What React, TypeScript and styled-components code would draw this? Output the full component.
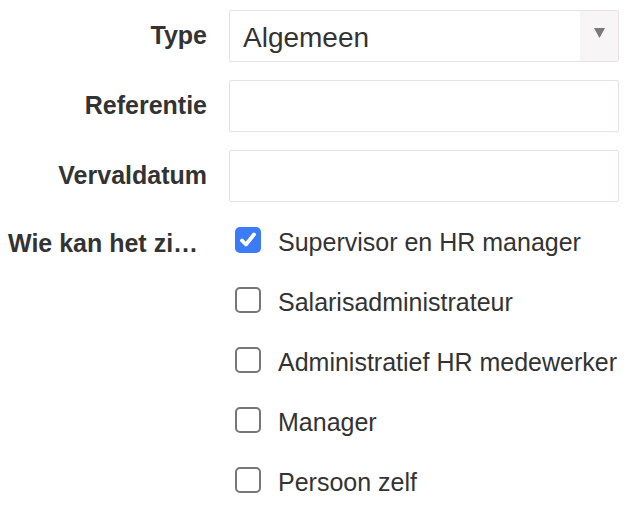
import React from 'react';
import styled, { createGlobalStyle } from 'styled-components';

const GlobalStyle = createGlobalStyle`
    body {
        margin: 0;
        background: #ffffff;
        font-family: 'Liberation Sans', Arial, Helvetica, sans-serif;
        color: #333333;
    }
`;

const Form = styled.div`
    display: grid;
    grid-template-columns: 199px 390px;
    column-gap: 22px;
    row-gap: 18px;
    padding: 10px 17px 0 8px;
    align-items: center;
`;

const Label = styled.label`
    font-size: 25px;
    font-weight: bold;
    color: #333333;
    text-align: right;
    white-space: nowrap;
    padding-bottom: 2px;
`;

const TopLabel = styled(Label)`
    align-self: start;
    text-align: left;
    padding-top: 9px;
`;

const Input = styled.input`
    box-sizing: border-box;
    width: 100%;
    height: 52px;
    border: 1.5px solid #e6e2e4;
    border-radius: 2px;
    background: #ffffff;
    font-family: inherit;
    font-size: 24px;
    padding: 0 12px;
    outline: none;
`;

const SelectBox = styled.div`
    box-sizing: border-box;
    display: flex;
    height: 52px;
    border: 1.5px solid #e6e2e4;
    border-radius: 2px;
    background: #ffffff;
`;

const SelectValue = styled.div`
    flex: 1;
    display: flex;
    align-items: center;
    padding: 3px 0 0 13px;
    font-size: 28px;
    color: #333333;
`;

const SelectArrow = styled.div`
    width: 38px;
    background: #f7f5f6;
    display: flex;
    justify-content: center;
    padding-top: 17px;
    box-sizing: border-box;
`;

const Options = styled.div`
    display: flex;
    flex-direction: column;
    gap: 34px;
    padding-top: 7px;
    padding-left: 6px;
`;

const Option = styled.div`
    display: flex;
    align-items: center;
    gap: 17px;
    height: 26px;
    font-size: 25px;
    color: #333333;
    white-space: nowrap;
`;

const OptionText = styled.span`
    padding-top: 4px;
`;

const Box = styled.span<{ $checked?: boolean }>`
    box-sizing: border-box;
    flex: none;
    width: 26px;
    height: 26px;
    border-radius: 5px;
    display: flex;
    align-items: center;
    justify-content: center;
    background: ${(p) => (p.$checked ? '#3b7cf6' : '#ffffff')};
    border: ${(p) => (p.$checked ? 'none' : '2px solid #767676')};
`;

const options = [
    { label: 'Supervisor en HR manager', checked: true },
    { label: 'Salarisadministrateur', checked: false },
    { label: 'Administratief HR medewerker', checked: false },
    { label: 'Manager', checked: false },
    { label: 'Persoon zelf', checked: false },
];

export default function App() {
    return (
        <>
            <GlobalStyle />
            <Form>
                <Label>Type</Label>
                <SelectBox>
                    <SelectValue>Algemeen</SelectValue>
                    <SelectArrow>
                        <svg width="11" height="10" viewBox="0 0 11 10">
                            <path d="M0 0 H11 L5.5 10 Z" fill="#7a7a7a" />
                        </svg>
                    </SelectArrow>
                </SelectBox>

                <Label>Referentie</Label>
                <Input />

                <Label>Vervaldatum</Label>
                <Input />

                <TopLabel>Wie kan het zi…</TopLabel>
                <Options>
                    {options.map((o) => (
                        <Option key={o.label}>
                            <Box $checked={o.checked}>
                                {o.checked && (
                                    <svg width="20" height="20" viewBox="0 0 20 20">
                                        <path
                                            d="M4 10.5 L8 14.5 L16 4.5"
                                            fill="none"
                                            stroke="#ffffff"
                                            strokeWidth="3.8"
                                            strokeLinecap="round"
                                            strokeLinejoin="round"
                                        />
                                    </svg>
                                )}
                            </Box>
                            <OptionText>{o.label}</OptionText>
                        </Option>
                    ))}
                </Options>
            </Form>
        </>
    );
}
